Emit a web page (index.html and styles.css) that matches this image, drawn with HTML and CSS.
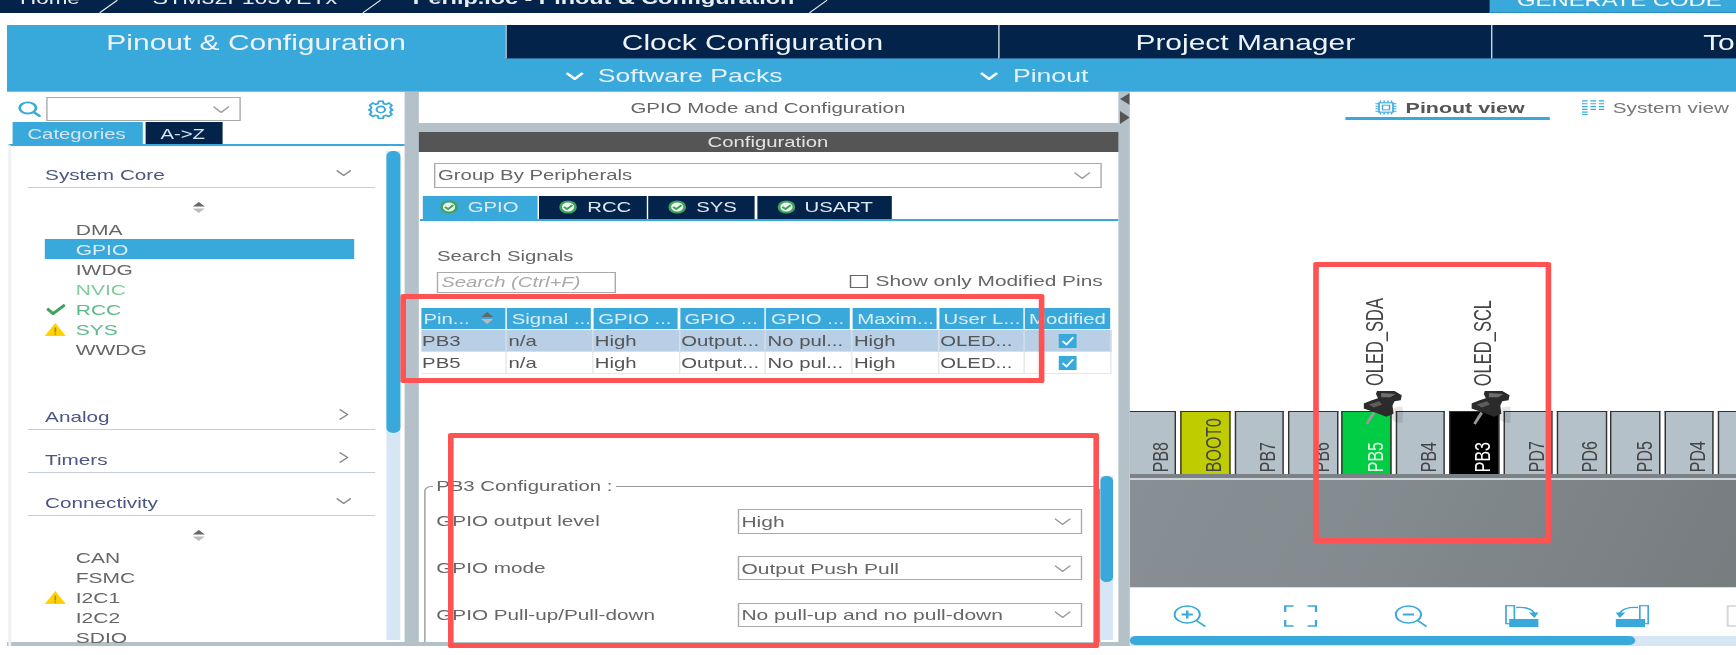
FILE: index.html
```html
<!DOCTYPE html>
<html lang="en">
<head>
<meta charset="utf-8">
<title>Perlip.ioc - Pinout &amp; Configuration</title>
<link rel="stylesheet" href="styles.css">
</head>
<body>
<svg class="defs" aria-hidden="true">
  <symbol id="chev" viewBox="0 0 12 6" preserveAspectRatio="none"><polyline points="0.5,0.5 6,5.5 11.5,0.5" fill="none" stroke="currentColor" stroke-width="1.2" vector-effect="non-scaling-stroke"/></symbol>
  <symbol id="chev-b" viewBox="0 0 12 6" preserveAspectRatio="none"><polyline points="0.7,0.7 6,5.2 11.3,0.7" fill="none" stroke="currentColor" stroke-width="2.2" vector-effect="non-scaling-stroke"/></symbol>
  <symbol id="chev-r" viewBox="0 0 6 12" preserveAspectRatio="none"><polyline points="0.5,0.5 5.5,6 0.5,11.5" fill="none" stroke="currentColor" stroke-width="1.2" vector-effect="non-scaling-stroke"/></symbol>
  <symbol id="sort" viewBox="0 0 14 14" preserveAspectRatio="none"><path d="M7 1 L13 6 H1 Z" fill="#666"/><path d="M7 13 L13 8 H1 Z" fill="#bbb"/></symbol>
  <symbol id="ok" viewBox="0 0 16 16" preserveAspectRatio="none"><circle cx="8" cy="8" r="7.5" fill="#3da35d"/><circle cx="8" cy="8" r="5.2" fill="#eef7ef"/><polyline points="4.5,7.8 7.2,10.4 11.6,5.8" fill="none" stroke="#3da35d" stroke-width="2"/></symbol>
  <symbol id="warn" viewBox="0 0 20 13" preserveAspectRatio="none"><path d="M10 0 L20 13 H0 Z" fill="#ffd200"/><rect x="9.2" y="4.5" width="1.6" height="5" fill="#b98a00"/><rect x="9.2" y="10.4" width="1.6" height="1.5" fill="#b98a00"/></symbol>
  <symbol id="tick" viewBox="0 0 20 12" preserveAspectRatio="none"><polyline points="1,5 7,10.5 19,1" fill="none" stroke="#3da35d" stroke-width="3.2"/></symbol>
  <symbol id="cb" viewBox="0 0 14 13" preserveAspectRatio="none"><rect width="14" height="13" fill="#39a9dc"/><polyline points="3,6.5 6,9.8 11,3" fill="none" stroke="#fff" stroke-width="1.5"/></symbol>
  <symbol id="pushpin" viewBox="0 0 38 34" preserveAspectRatio="none">
    <ellipse cx="35" cy="24" rx="9" ry="8" fill="#000" opacity=".1"/>
    <line x1="10" y1="22" x2="3" y2="33" stroke="#9a9a9a" stroke-width="2.8"/>
    <path d="M13 1 L30 1 L37 5 L36 10 L30 11 L28 15 L29 23 L22 26 L12 22 L0 18 L0 13 L8 10 L14 8 L12 4 Z" fill="#2b2b2b"/>
    <path d="M17 3 L31 4 L26 7 L17 7 Z" fill="#6f6f6f"/>
    <path d="M5 14 L15 11 L18 14 L10 17 Z" fill="#5e5e5e"/>
  </symbol>
</svg>

<div class="page">
  <header class="crumbs">
    <span class="crumb crumb-home">Home</span>
    <svg class="sep sep-a" viewBox="0 0 13 13"><line x1="13" y1="0" x2="0" y2="13" stroke="#e8eef4" stroke-width="1"/></svg>
    <span class="crumb crumb-mcu">STM32F103VETx</span>
    <svg class="sep sep-b" viewBox="0 0 13 13"><line x1="13" y1="0" x2="0" y2="13" stroke="#e8eef4" stroke-width="1"/></svg>
    <span class="crumb crumb-file">Perlip.ioc - Pinout &amp; Configuration</span>
    <svg class="sep sep-c" viewBox="0 0 13 13"><line x1="13" y1="0" x2="0" y2="13" stroke="#e8eef4" stroke-width="1"/></svg>
    <span class="generate"><span class="crumb">GENERATE CODE</span></span>
  </header>

  <nav class="tabs">
    <div class="tab tab-on">Pinout &amp; Configuration</div>
    <div class="tab">Clock Configuration</div>
    <div class="tab">Project Manager</div>
    <div class="tab">Tools</div>
  </nav>

  <div class="subbar">
    <span class="sub sub-packs"><svg class="sub-chev"><use href="#chev-b"/></svg>Software Packs</span>
    <span class="sub sub-pinout"><svg class="sub-chev"><use href="#chev-b"/></svg>Pinout</span>
  </div>

  <main class="main">
    <aside class="left">
      <div class="finder">
        <svg class="finder-lens" viewBox="0 0 16 15" preserveAspectRatio="none"><circle cx="7" cy="6.5" r="5.2" fill="none" stroke="#39a9dc" stroke-width="1.8"/><line x1="10.8" y1="10.5" x2="15" y2="14.5" stroke="#39a9dc" stroke-width="2"/></svg>
        <div class="finder-box"><svg class="chev-sel"><use href="#chev"/></svg></div>
        <svg class="finder-gear" viewBox="0 0 24 24" preserveAspectRatio="none"><path d="M10 1.5h4l.7 3 2.3 1 2.7-1.6 2.8 2.8-1.6 2.7 1 2.3 3 .7v0l-3 .7-1 2.3 1.6 2.7-2.8 2.8-2.7-1.6-2.3 1-.7 3h-4l-.7-3-2.3-1-2.7 1.6-2.8-2.8 1.6-2.7-1-2.3-3-.7v0l3-.7 1-2.3-1.6-2.7 2.8-2.8 2.7 1.6 2.3-1z" fill="none" stroke="#39a9dc" stroke-width="2"/><circle cx="12" cy="12" r="4" fill="none" stroke="#39a9dc" stroke-width="2"/></svg>
      </div>
      <div class="lefttabs">
        <span class="lefttab lefttab-on">Categories</span>
        <span class="lefttab">A-&gt;Z</span>
      </div>
      <div class="tree">
        <div class="head">System Core<svg class="chev-head"><use href="#chev"/></svg></div>
        <div class="sortrow"><svg class="sort"><use href="#sort"/></svg></div>
        <div class="item"><span class="slot"></span>DMA</div>
        <div class="item item-on"><span class="slot"></span>GPIO</div>
        <div class="item"><span class="slot"></span>IWDG</div>
        <div class="item item-nvic"><span class="slot"></span>NVIC</div>
        <div class="item item-green"><span class="slot"><svg class="ico-tick"><use href="#tick"/></svg></span>RCC</div>
        <div class="item item-green"><span class="slot"><svg class="ico-warn"><use href="#warn"/></svg></span>SYS</div>
        <div class="item"><span class="slot"></span>WWDG</div>
        <div class="head head-first">Analog<svg class="chev-side"><use href="#chev-r"/></svg></div>
        <div class="head head-next">Timers<svg class="chev-side"><use href="#chev-r"/></svg></div>
        <div class="head head-next">Connectivity<svg class="chev-head"><use href="#chev"/></svg></div>
        <div class="sortrow"><svg class="sort"><use href="#sort"/></svg></div>
        <div class="item"><span class="slot"></span>CAN</div>
        <div class="item"><span class="slot"></span>FSMC</div>
        <div class="item"><span class="slot"><svg class="ico-warn"><use href="#warn"/></svg></span>I2C1</div>
        <div class="item"><span class="slot"></span>I2C2</div>
        <div class="item"><span class="slot"></span>SDIO</div>
      </div>
      <div class="vscroll vscroll-left"><div class="vthumb vthumb-left"></div></div>
    </aside>

    <section class="mid">
      <div class="mid-title">GPIO Mode and Configuration</div>
      <div class="mid-config">Configuration</div>
      <div class="mid-body">
        <div class="select select-group"><span>Group By Peripherals</span><svg class="chev-sel"><use href="#chev"/></svg></div>
        <div class="ptabs">
          <span class="ptab ptab-on ptab-gpio"><svg class="ico-ok"><use href="#ok"/></svg>GPIO</span>
          <span class="ptab ptab-rcc"><svg class="ico-ok"><use href="#ok"/></svg>RCC</span>
          <span class="ptab ptab-sys"><svg class="ico-ok"><use href="#ok"/></svg>SYS</span>
          <span class="ptab ptab-usart"><svg class="ico-ok"><use href="#ok"/></svg>USART</span>
        </div>
        <div class="search-label">Search Signals</div>
        <div class="search-row">
          <div class="search-box">Search (Ctrl+F)</div>
          <label class="only"><span class="only-box"></span>Show only Modified Pins</label>
        </div>
        <div class="grid">
          <div class="th th-sort">Pin...<svg class="sort-th"><use href="#sort"/></svg></div>
          <div class="th">Signal ...</div>
          <div class="th">GPIO ...</div>
          <div class="th">GPIO ...</div>
          <div class="th">GPIO ...</div>
          <div class="th">Maxim...</div>
          <div class="th">User L...</div>
          <div class="th th-last">Modified</div>
          <div class="td td-sel">PB3</div><div class="td td-sel">n/a</div><div class="td td-sel">High</div><div class="td td-sel">Output...</div><div class="td td-sel">No pul...</div><div class="td td-sel">High</div><div class="td td-sel">OLED...</div><div class="td td-sel td-c"><svg class="cb"><use href="#cb"/></svg></div>
          <div class="td">PB5</div><div class="td">n/a</div><div class="td">High</div><div class="td">Output...</div><div class="td">No pul...</div><div class="td">High</div><div class="td">OLED...</div><div class="td td-c"><svg class="cb"><use href="#cb"/></svg></div>
        </div>
        <fieldset class="pinconf">
          <legend>PB3 Configuration :</legend>
          <div class="conf-row"><span>GPIO output level</span><div class="select select-conf"><span>High</span><svg class="chev-sel"><use href="#chev"/></svg></div></div>
          <div class="conf-row"><span>GPIO mode</span><div class="select select-conf"><span>Output Push Pull</span><svg class="chev-sel"><use href="#chev"/></svg></div></div>
          <div class="conf-row"><span>GPIO Pull-up/Pull-down</span><div class="select select-conf"><span>No pull-up and no pull-down</span><svg class="chev-sel"><use href="#chev"/></svg></div></div>
        </fieldset>
      </div>
      <div class="vscroll vscroll-mid"><div class="vthumb vthumb-mid"></div></div>
    </section>

    <div class="gutter">
      <svg class="gut-arrows" viewBox="0 0 8 32" preserveAspectRatio="none"><path d="M8 0 V12 L0 6 Z M0 18 V31 L8 24.5 Z" fill="#555"/></svg>
    </div>

    <section class="right">
      <div class="views">
        <div class="view view-on">
          <svg class="view-ico" viewBox="0 0 16 16" preserveAspectRatio="none"><rect x="3" y="3" width="10" height="10" fill="none" stroke="#39a9dc" stroke-width="1.2"/><rect x="5.5" y="5.5" width="5" height="5" fill="none" stroke="#39a9dc"/><path d="M4 0.5V2.5M6.7 0.5V2.5M9.4 0.5V2.5M12 0.5V2.5M4 13.5V15.5M6.7 13.5V15.5M9.4 13.5V15.5M12 13.5V15.5M0.5 4H2.5M0.5 6.7H2.5M0.5 9.4H2.5M0.5 12H2.5M13.5 4H15.5M13.5 6.7H15.5M13.5 9.4H15.5M13.5 12H15.5" stroke="#39a9dc"/></svg>
          Pinout view
        </div>
        <div class="view view-sys">
          <svg class="view-ico" viewBox="0 0 16 16" preserveAspectRatio="none"><path d="M0 1H4M0 4H4M0 7H4M0 10H4M0 13H4M0 15.5H4M6 1H10M6 4H10M6 7H10M6 10H10M12 1H16M12 4H16M12 7H16M12 10H16" stroke="#39a9dc" stroke-width="1.3"/></svg>
          System view
        </div>
      </div>
      <div class="canvas">
        <div class="pins">
          <div class="pin"><span class="pin-t">PB8</span></div>
          <div class="pin pin-boot"><span class="pin-t">BOOT0</span></div>
          <div class="pin"><span class="pin-t">PB7</span></div>
          <div class="pin"><span class="pin-t">PB6</span></div>
          <div class="pin pin-green"><span class="pin-t">PB5</span><span class="pin-name">OLED_SDA</span><svg class="pushpin"><use href="#pushpin"/></svg></div>
          <div class="pin"><span class="pin-t">PB4</span></div>
          <div class="pin pin-black"><span class="pin-t">PB3</span><span class="pin-name">OLED_SCL</span><svg class="pushpin"><use href="#pushpin"/></svg></div>
          <div class="pin"><span class="pin-t">PD7</span></div>
          <div class="pin"><span class="pin-t">PD6</span></div>
          <div class="pin"><span class="pin-t">PD5</span></div>
          <div class="pin"><span class="pin-t">PD4</span></div>
          <div class="pin"></div>
        </div>
        <div class="chip"></div>
      </div>
      <div class="tools">
        <svg class="tool" viewBox="0 0 24 22" preserveAspectRatio="none"><ellipse cx="10" cy="9.5" rx="9" ry="8.5" fill="none" stroke="#39a9dc" stroke-width="1.5"/><path d="M6 9.5H14M10 5.5V13.5" stroke="#39a9dc" stroke-width="1.8"/><line x1="16.5" y1="15.5" x2="23" y2="21.5" stroke="#39a9dc" stroke-width="1.6"/></svg>
        <svg class="tool" viewBox="0 0 24 22" preserveAspectRatio="none"><path d="M7 1H1V7M17 1H23V7M7 21H1V15M17 21H23V15" fill="none" stroke="#39a9dc" stroke-width="1.6"/></svg>
        <svg class="tool" viewBox="0 0 24 22" preserveAspectRatio="none"><ellipse cx="10" cy="9.5" rx="9" ry="8.5" fill="none" stroke="#39a9dc" stroke-width="1.5"/><path d="M6 9.5H14" stroke="#39a9dc" stroke-width="1.8"/><line x1="16.5" y1="15.5" x2="23" y2="21.5" stroke="#39a9dc" stroke-width="1.6"/></svg>
        <svg class="tool" viewBox="0 0 24 22" preserveAspectRatio="none"><rect x="0.7" y="0.7" width="6" height="18" fill="none" stroke="#39a9dc" stroke-width="1.2"/><rect x="3" y="14" width="21" height="8" fill="#39a9dc"/><path d="M8 2.5C14 2 19 4 21 8" fill="none" stroke="#39a9dc" stroke-width="1.3"/><path d="M17 7.5H24L21 13Z" fill="#39a9dc"/></svg>
        <svg class="tool" viewBox="0 0 24 22" preserveAspectRatio="none"><rect x="17.3" y="0.7" width="6" height="18" fill="none" stroke="#39a9dc" stroke-width="1.2"/><rect x="0" y="14" width="21" height="8" fill="#39a9dc"/><path d="M16 2.5C10 2 5 4 3 8" fill="none" stroke="#39a9dc" stroke-width="1.3"/><path d="M0 7.5H7L3 13Z" fill="#39a9dc"/></svg>
        <svg class="tool" viewBox="0 0 24 22" preserveAspectRatio="none"><rect x="1" y="1" width="10" height="20" fill="none" stroke="#d8d8d8" stroke-width="1.6"/></svg>
      </div>
      <div class="hscroll"><div class="hthumb"></div></div>
    </section>
  </main>

  <div class="mark mark-table"></div>
  <div class="mark mark-conf"></div>
  <div class="mark mark-pins"></div>
</div>
</body>
</html>
```
FILE: styles.css
```css
* { box-sizing: border-box; }
html, body { margin: 0; height: 655px; overflow: hidden; background: #fff; }
.defs { position: absolute; width: 0; height: 0; }

.page {
  position: relative;
  width: 1240px;
  height: 655px;
  overflow: hidden;
  transform: scaleX(1.4);
  transform-origin: 0 0;
  filter: blur(0.35px);
  font-family: "Liberation Sans", Arial, sans-serif;
  font-size: 14.5px;
  color: #666;
  background: #fff;
}

/* breadcrumb */
.crumbs { display: flex; height: 13px; background: #03234b; color: #e8eef4; overflow: hidden; }
.crumb { display: block; margin-top: -9px; font-size: 16px; line-height: 16px; white-space: nowrap; }
.crumb-home { margin-left: 14.3px; }
.crumb-mcu { margin-left: 25px; font-size: 16.6px; }
.crumb-file { margin-left: 23px; font-weight: 700; font-size: 16.7px; }
.sep { flex: none; width: 13px; height: 13px; }
.sep-a { margin-left: 14px; }
.sep-b { margin-left: 18px; }
.sep-c { margin-left: 11px; }
.generate { margin-left: auto; width: 176.4px; padding-left: 20px; background: #39a9dc; border-bottom: 1px solid #2a8fc0; }
.generate .crumb { margin-top: -7px; font-size: 17px; color: #f4f9fc; }

/* main tabs */
.tabs { display: flex; height: 34px; margin-top: 12px; margin-left: 5px; }
.tab { flex: none; width: 352px; padding-top: 1.5px; border-left: 1px solid #c8d4dc; background: #03234b; color: #eef3f7; font-size: 21.4px; line-height: 32px; text-align: center; white-space: nowrap; border-bottom: 1px solid #2a6f9e; }
.tab-on { width: 356px; border: 0; background: #39a9dc; }

.subbar { display: flex; height: 33px; padding-top: 1px; margin-left: 5px; background: #39a9dc; border-bottom: 1px solid #6fc0e6; color: #e4f2fa; font-size: 19px; line-height: 31px; }
.sub { display: flex; align-items: center; white-space: nowrap; }
.sub-chev { flex: none; width: 13px; height: 8px; margin-right: 10.5px; color: #fff; }
.sub-packs { margin-left: 398.5px; }
.sub-pinout { margin-left: 141px; }

/* panels */
.main { display: flex; height: 554px; margin-left: 5px; background: #b5c1c9; }

.left { position: relative; flex: none; width: 284px; height: 550px; background: #fff; }
.finder { display: flex; align-items: center; height: 24px; margin-top: 2px; padding-top: 2px; position: relative; top: 2px; }
.finder-lens { flex: none; width: 18px; height: 16px; margin-left: 7px; }
.finder-box { display: flex; align-items: center; justify-content: flex-end; flex: none; width: 139px; height: 24px; margin-left: 3px; padding-right: 7px; border: 1.5px solid #aaa; }
.finder-gear { flex: none; width: 18px; height: 19px; margin-left: 91px; }
.chev-sel { flex: none; width: 12px; height: 7px; color: #999; }

.lefttabs { display: flex; gap: 1.5px; height: 22px; margin-top: 4px; margin-left: 3.6px; }
.lefttab { display: block; height: 22px; padding-left: 11px; background: #03234b; color: #d5e4ee; font-size: 14.5px; line-height: 24px; width: 55px; }
.lefttab-on { width: 93.5px; background: #39a9dc; }

.tree { height: 502px; margin-left: 1px; padding-top: 17px; border-top: 2px solid #39a9dc; border-left: 2px solid #eef1f4; overflow: hidden; }
.head { display: flex; align-items: center; justify-content: space-between; height: 25px; margin-left: 11.5px; margin-right: 21px; padding-left: 12.7px; padding-right: 17px; border-bottom: 1.5px solid #c5ced5; color: #4a5683; font-size: 14.8px; }
.head-first { margin-top: 46px; }
.head-next { margin-top: 18px; }
.chev-head { width: 11px; height: 6px; color: #8a8a8a; margin-top: -5px; }
.chev-side { width: 7px; height: 11px; color: #8a8a8a; margin-top: -6px; margin-right: 2px; }
.sortrow { display: flex; justify-content: center; align-items: center; height: 22px; margin-top: 9px; padding: 0 14px 2px 0; }
.sort { width: 10px; height: 13px; }
.item { display: flex; align-items: center; width: 221.6px; height: 20px; margin-left: 23.5px; color: #666; font-size: 15px; }
.slot { display: flex; align-items: center; justify-content: center; flex: none; width: 22.6px; height: 20px; padding-right: 6px; }
.item-on { background: #39a9dc; color: #d8edf8; }
.item-nvic { color: #7fcb9b; }
.item-green { color: #5cb98b; }
.ico-tick { width: 14px; height: 11px; }
.ico-warn { width: 15px; height: 13px; }

.vscroll { position: absolute; background: #d6e6f4; }
.vthumb { width: 100%; background: #39a9dc; border-radius: 5px; }
.vscroll-left { left: 271.4px; top: 59px; width: 9.3px; height: 489px; }
.vthumb-left { height: 282px; }
.vscroll-mid { left: 487px; top: 384px; width: 9px; height: 164px; }
.vthumb-mid { height: 106px; }

.mid { position: relative; flex: none; width: 500px; height: 550px; margin-left: 9.5px; overflow: hidden; }
.mid-title { height: 31px; padding-top: 1px; background: #fff; font-size: 14.6px; line-height: 30px; text-align: center; }
.mid-config { height: 20px; margin-top: 9px; background: #555; color: #e3e3e3; font-size: 14.5px; line-height: 20px; text-align: center; }
.mid-body { height: 490px; padding-top: 11px; background: #fff; overflow: hidden; }
.select { display: flex; align-items: center; justify-content: space-between; height: 24.5px; padding: 0 7px 0 2px; border: 1.5px solid #aaa; background: #fff; color: #666; white-space: nowrap; }
.select-group { width: 477px; margin-left: 11.4px; }
.ptabs { display: flex; gap: 1.4px; height: 25px; margin-top: 8.5px; margin-left: 1px; padding-left: 2.6px; border-bottom: 2px solid #39a9dc; }
.ptab { display: flex; align-items: center; height: 23px; padding-left: 14px; padding-bottom: 1px; background: #03234b; color: #dfe9f0; font-size: 14.5px; white-space: nowrap; }
.ptab-on { background: #39a9dc; padding-left: 12px; }
.ptab-gpio { width: 82px; }
.ptab-rcc { width: 76.4px; }
.ptab-sys { width: 76px; }
.ptab-usart { width: 96px; }
.ico-ok { flex: none; width: 13.5px; height: 14px; margin-right: 6.5px; }
.search-label { height: 20px; margin-top: 25px; margin-left: 13.6px; line-height: 20px; }
.search-row { display: flex; align-items: flex-start; margin-top: 6px; margin-left: 13.6px; }
.search-box { flex: none; width: 128px; height: 21px; padding-left: 2px; border: 1.5px solid #aaa; color: #aaa; font-style: italic; line-height: 19px; white-space: nowrap; }
.only { display: flex; align-items: center; height: 14px; margin-top: 2px; margin-left: 166.8px; font-size: 14.9px; white-space: nowrap; }
.only-box { flex: none; width: 13.5px; height: 13px; margin-right: 5px; border: 1.5px solid #666; background: #fff; }

.grid { display: grid; grid-template-columns: repeat(8, 61.7px); grid-template-rows: 21px 23px 22px; margin-top: 15px; margin-left: 2px; }
.th { position: relative; height: 21px; margin-right: 1.5px; padding-left: 3.4px; background: #39a9dc; color: #dcedf7; line-height: 22px; white-space: nowrap; overflow: hidden; }
.th-sort { padding-left: 2px; }
.th-last { padding-left: 0; text-align: center; }
.sort-th { position: absolute; top: 3px; right: 8px; width: 10px; height: 14px; }
.td { padding-top: 1px; padding-left: 1px; border-right: 1px solid #e4e8eb; border-bottom: 1px solid #e4e8eb; color: #555; line-height: 20px; white-space: nowrap; overflow: hidden; }
.td-sel { margin-top: 1px; background: #b8cfe5; border-color: #d5e0ea; }
.td-c { display: flex; justify-content: center; align-items: center; padding: 0; }
.cb { width: 13.5px; height: 14px; }

.pinconf { margin: 104px 0 0 4.3px; width: 483.5px; height: 200px; padding: 15px 0 0 7.8px; border: 1.2px solid #999; border-radius: 5px; font-size: 14.8px; }
.pinconf legend { margin-left: -3px; padding: 0 3px; font-size: 14.5px; line-height: 16px; white-space: nowrap; }
.conf-row { display: flex; align-items: center; justify-content: space-between; width: 461.5px; height: 24.5px; margin-bottom: 22.3px; }
.select-conf { flex: none; width: 246.5px; padding-left: 2px; font-size: 15px; }

.gutter { flex: none; width: 8.5px; padding-top: 1px; }
.gut-arrows { display: block; width: 7px; height: 32px; margin-left: 1px; }

.right { flex: none; width: 433px; height: 554px; background: #fff; overflow: hidden; }
.views { display: flex; height: 28px; padding-left: 154px; }
.view { display: flex; align-items: flex-start; flex: none; height: 28px; padding-top: 8px; line-height: 16px; white-space: nowrap; }
.view-on { width: 146px; padding-left: 21px; border-bottom: 3px solid #39a9dc; color: #555; font-weight: 700; font-size: 15.3px; }
.view-sys { margin-left: 23px; color: #777; font-size: 14.8px; }
.view-ico { flex: none; width: 16px; height: 15px; margin-right: 6px; }

.canvas { height: 467px; display: flex; flex-direction: column; justify-content: flex-end; overflow: hidden; }
.pins { display: flex; gap: 2.9px; flex: none; margin-left: -2.1px; }
.pin { position: relative; display: flex; justify-content: center; align-items: flex-end; flex: none; width: 35.5px; height: 63px; padding-left: 12.8px; padding-bottom: 2px; background: #b5c1c9; border: 1px solid #333; border-bottom-width: 0; color: #444; }
.pin-t { writing-mode: vertical-rl; transform: rotate(180deg); font-size: 16px; line-height: 18px; white-space: nowrap; }
.pin-boot { background: #bfcc00; }
.pin-green { background: #00cc44; color: #e4ffe9; }
.pin-black { background: #000; color: #fff; }
.pin-name { position: absolute; bottom: 88px; left: 13.5px; writing-mode: vertical-rl; transform: rotate(180deg); color: #444; font-size: 16.5px; line-height: 18px; white-space: nowrap; }
.pushpin { position: absolute; left: 14.5px; top: -22px; width: 28px; height: 35px; overflow: visible; z-index: 2; }
.chip { flex: none; height: 113px; background: linear-gradient(#7a8288 0 4px, #cdd3d7 4px 5.5px, transparent 5.5px), linear-gradient(110deg, #899095, #828a8e 45%, #777c7f); }

.tools { display: flex; gap: 55px; height: 49px; padding-top: 17px; padding-left: 30.7px; border-top: 1px solid #d8dde0; }
.tool { flex: none; width: 24px; height: 22px; }
.hscroll { height: 10px; background: #d6e6f4; }
.hthumb { width: 360.7px; height: 9px; background: #39a9dc; border-radius: 5px; }

/* annotation frames drawn on top of the screenshot */
.mark { position: absolute; border-style: solid; border-color: #ff5252; border-width: 5px 4px; border-radius: 2px; }
.mark-pins { left: 938px; top: 262px; width: 170px; height: 281px; }
.mark-table { left: 285.7px; top: 294px; width: 460px; height: 89px; }
.mark-conf { left: 320px; top: 433px; width: 465px; height: 215px; }
```
